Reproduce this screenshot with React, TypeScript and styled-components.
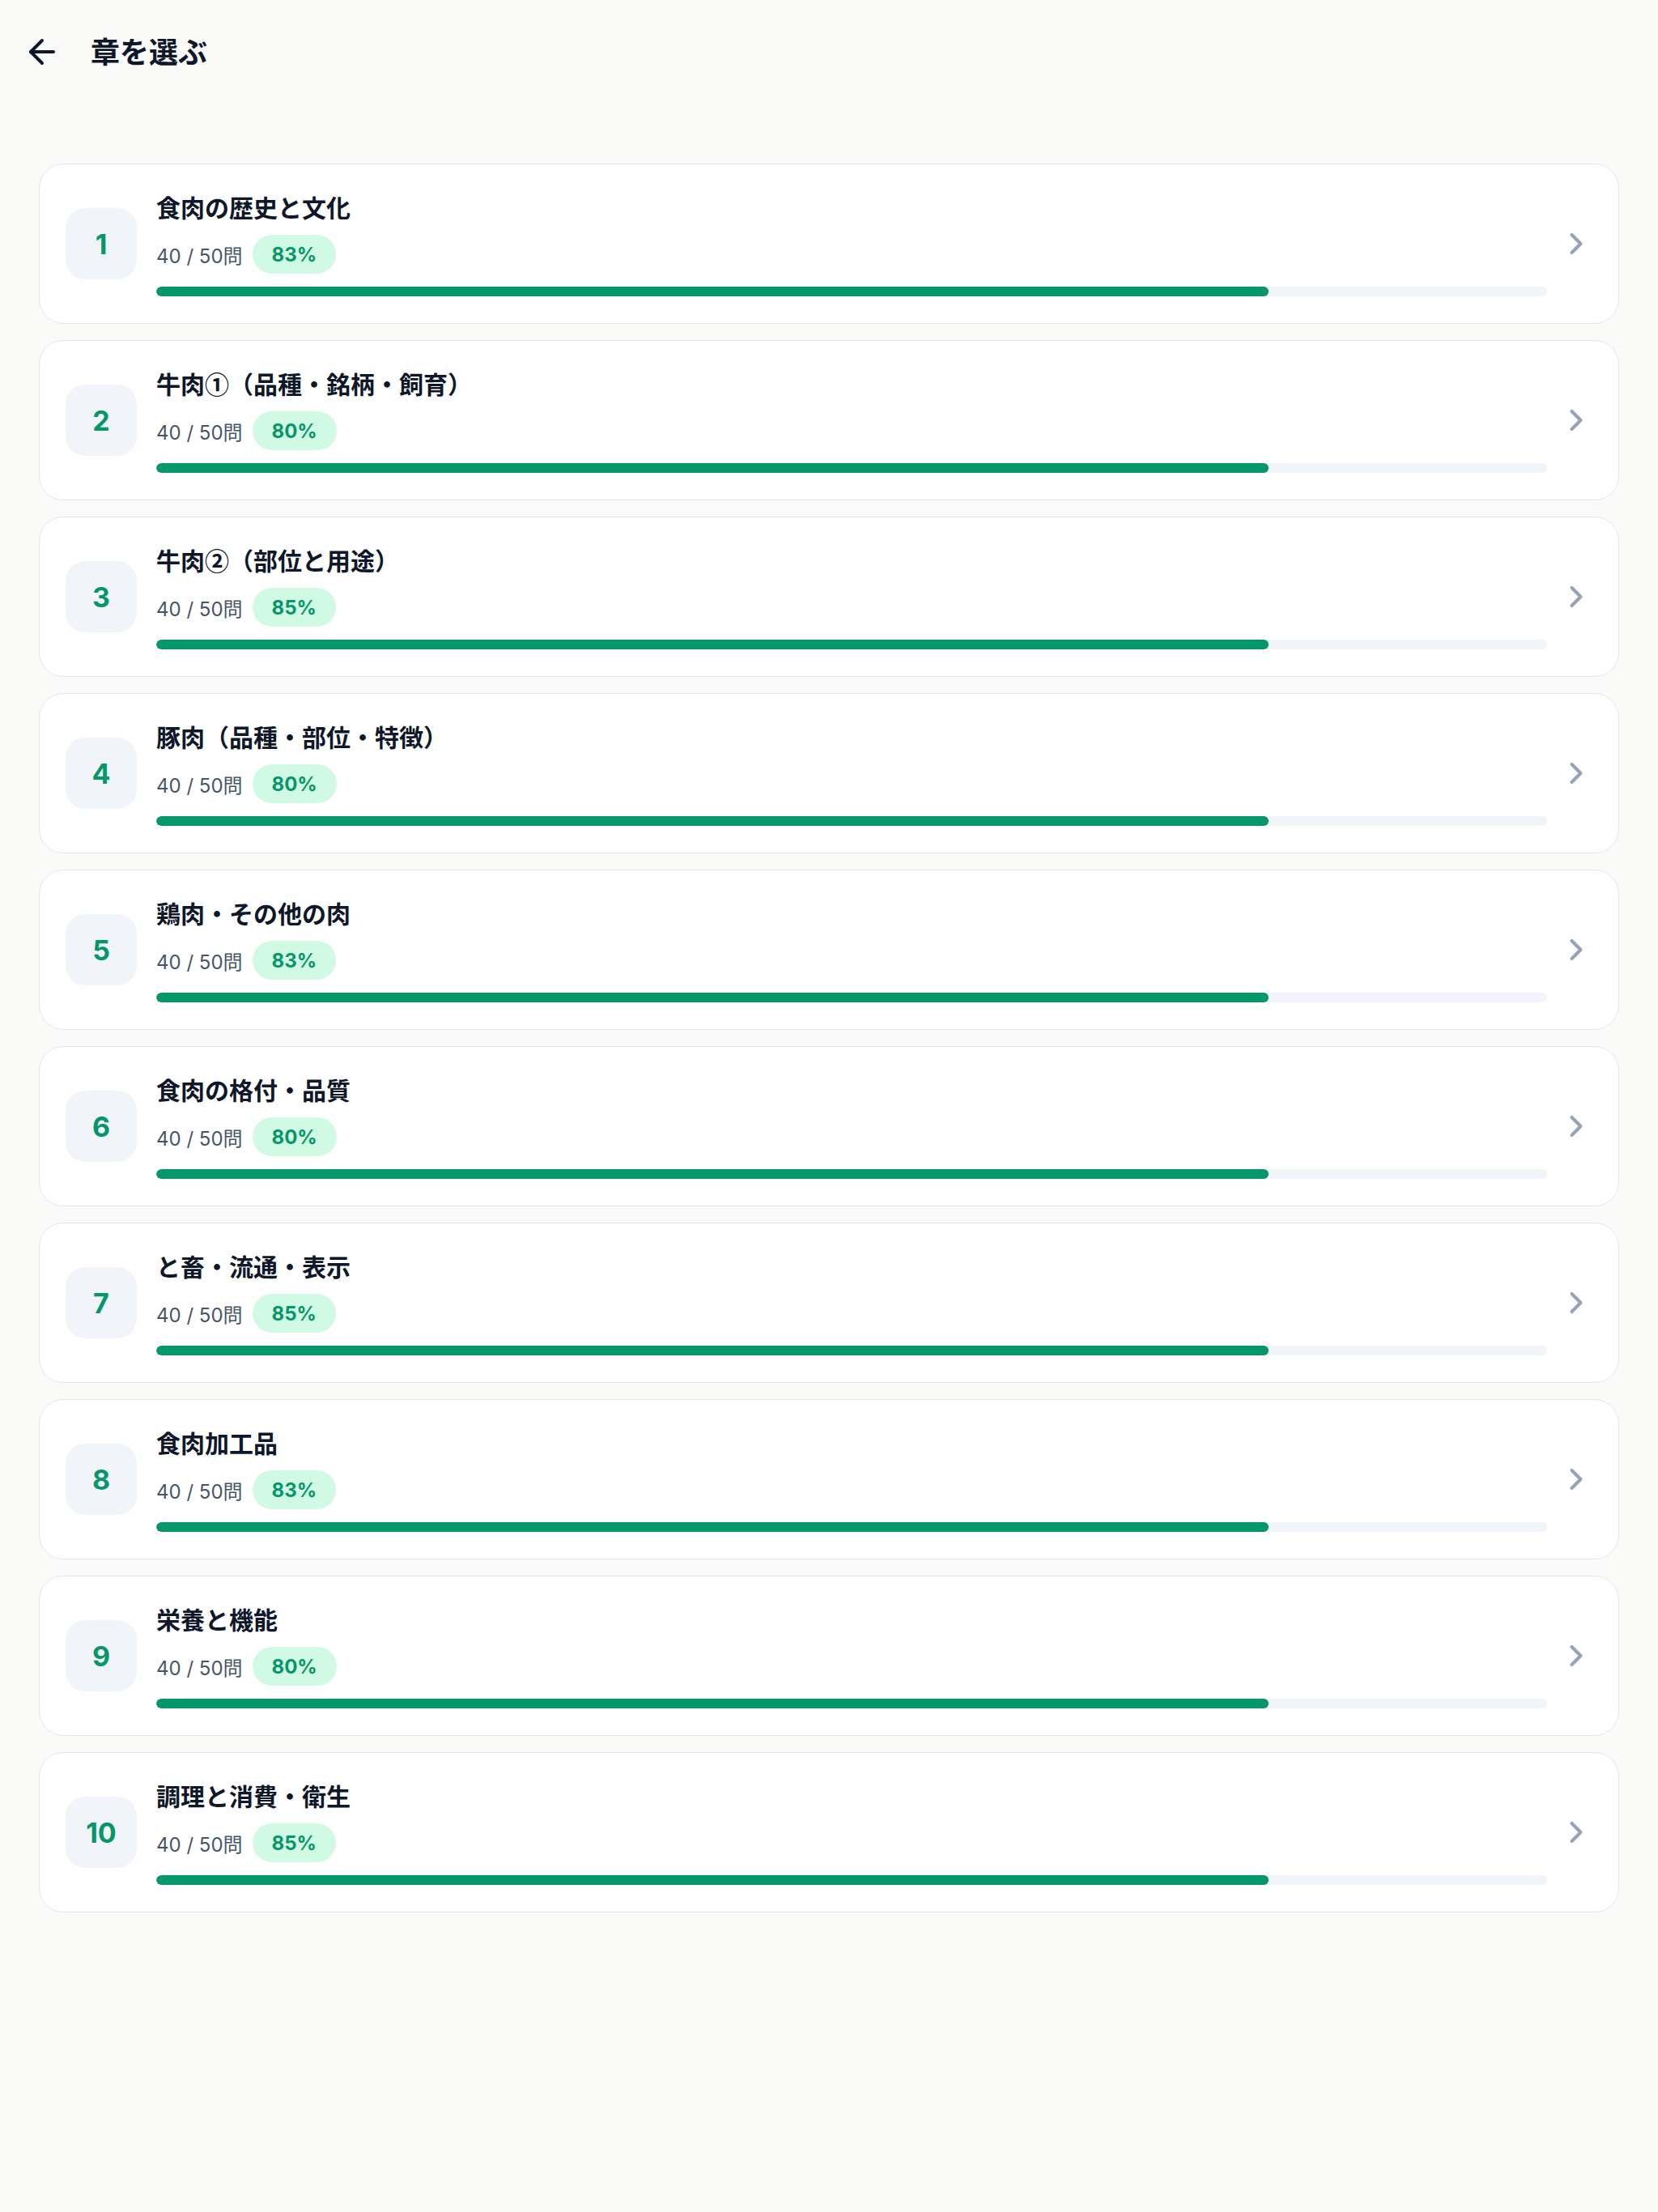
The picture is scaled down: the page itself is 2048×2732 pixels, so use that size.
import { ArrowLeft, ChevronRight } from "lucide-react";
import styled, { createGlobalStyle } from "styled-components";

interface Chapter {
  no: number;
  title: string;
  answered: number;
  total: number;
  accuracy: number;
}

const chapters: Chapter[] = [
  { no: 1, title: "食肉の歴史と文化", answered: 40, total: 50, accuracy: 83 },
  { no: 2, title: "牛肉①（品種・銘柄・飼育）", answered: 40, total: 50, accuracy: 80 },
  { no: 3, title: "牛肉②（部位と用途）", answered: 40, total: 50, accuracy: 85 },
  { no: 4, title: "豚肉（品種・部位・特徴）", answered: 40, total: 50, accuracy: 80 },
  { no: 5, title: "鶏肉・その他の肉", answered: 40, total: 50, accuracy: 83 },
  { no: 6, title: "食肉の格付・品質", answered: 40, total: 50, accuracy: 80 },
  { no: 7, title: "と畜・流通・表示", answered: 40, total: 50, accuracy: 85 },
  { no: 8, title: "食肉加工品", answered: 40, total: 50, accuracy: 83 },
  { no: 9, title: "栄養と機能", answered: 40, total: 50, accuracy: 80 },
  { no: 10, title: "調理と消費・衛生", answered: 40, total: 50, accuracy: 85 },
];

export default function App() {
  return (
    <>
      <GlobalStyle />
      <Page>
        <Header>
          <BackButton aria-label="戻る">
            <ArrowLeft size={48} strokeWidth={2} color="#0f172a" />
          </BackButton>
          <HeaderTitle>章を選ぶ</HeaderTitle>
        </Header>

        <List>
          {chapters.map((each) => (
            <Card key={each.no}>
              <NumberBox>{each.no}</NumberBox>
              <Content>
                <Title>{each.title}</Title>
                <Stats>
                  <Count>
                    {each.answered} / {each.total}問
                  </Count>
                  <Badge>{each.accuracy}%</Badge>
                </Stats>
                <Track>
                  <Fill style={{ width: `${(each.answered / each.total) * 100}%` }} />
                </Track>
              </Content>
              <Arrow>
                <ChevronRight size={44} strokeWidth={2.2} color="#94a3b8" />
              </Arrow>
            </Card>
          ))}
        </List>
      </Page>
    </>
  );
}

const GlobalStyle = createGlobalStyle`
  * {
    box-sizing: border-box;
  }

  body {
    margin: 0;
    background-color: #fafaf9;
    font-family: Inter, "Noto Sans CJK JP", "Noto Sans", sans-serif;
    color: #0f172a;
  }
`;

const Page = styled.div`
  min-height: 100vh;
  background-color: #fafaf9;
`;

const Header = styled.header`
  display: flex;
  align-items: center;
  gap: 28px;

  height: 128px;
  padding: 0 20px;
`;

const BackButton = styled.button`
  display: flex;
  align-items: center;
  justify-content: center;

  width: 64px;
  height: 64px;
  padding: 0;

  border: none;
  background: transparent;
  cursor: pointer;
`;

const HeaderTitle = styled.h1`
  margin: 0;
  padding-bottom: 4px;

  font-family: "Noto Sans CJK JP", sans-serif;
  font-size: 36px;
  font-weight: 700;
  line-height: 1.4;
  color: #0f172a;
`;

const List = styled.main`
  display: flex;
  flex-direction: column;
  gap: 20px;

  padding: 74px 48px 48px;
`;

const Card = styled.div`
  display: flex;
  align-items: center;

  padding: 33px 30px 33px 32px;

  background-color: #ffffff;
  border: 1px solid #e2e8f0;
  border-radius: 30px;
`;

const NumberBox = styled.div`
  display: flex;
  align-items: center;
  justify-content: center;
  flex-shrink: 0;

  width: 88px;
  height: 88px;
  margin-right: 24px;

  background-color: #f1f5f9;
  border-radius: 24px;

  color: #059669;
  font-size: 34px;
  font-weight: 700;
`;

const Content = styled.div`
  display: flex;
  flex-direction: column;
  flex: 1;
`;

const Title = styled.div`
  font-family: "Noto Sans CJK JP", sans-serif;
  font-size: 30px;
  font-weight: 700;
  line-height: 38px;
  color: #0f172a;
`;

const Stats = styled.div`
  display: flex;
  align-items: center;
  gap: 12px;

  margin-top: 16px;
`;

const Count = styled.span`
  font-size: 24px;
  color: #475569;
`;

const Badge = styled.span`
  display: inline-flex;
  align-items: center;

  height: 48px;
  padding: 0 24px;

  background-color: #d1fae5;
  border-radius: 999px;

  color: #059669;
  font-size: 24px;
  font-weight: 700;
`;

const Track = styled.div`
  height: 12px;
  margin-top: 16px;

  background-color: #f1f5f9;
  border-radius: 999px;
  overflow: hidden;
`;

const Fill = styled.div`
  height: 100%;

  background-color: #059669;
  border-radius: 999px;
`;

const Arrow = styled.div`
  display: flex;
  flex-shrink: 0;

  margin-left: 14px;
`;
